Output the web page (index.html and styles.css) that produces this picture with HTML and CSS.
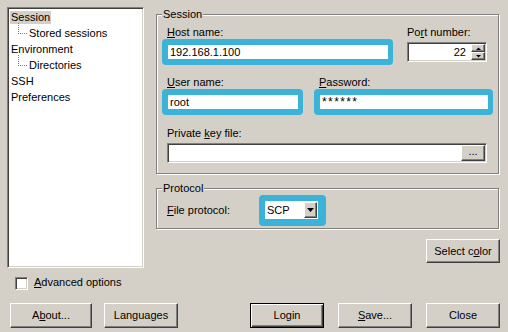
FILE: index.html
```html
<!DOCTYPE html>
<html>
<head>
<meta charset="utf-8">
<title>Login</title>
<link rel="stylesheet" href="styles.css">
</head>
<body>
<div class="dialog">
  <div class="main">
    <div class="left">
      <div class="tree sunken">
        <div class="node"><span class="sel">Session</span></div>
        <div class="node child"><span class="branch"></span>Stored sessions</div>
        <div class="node">Environment</div>
        <div class="node child"><span class="branch"></span>Directories</div>
        <div class="node">SSH</div>
        <div class="node">Preferences</div>
      </div>
      <div class="check"><span class="box sunken"></span><span class="check-lbl"><u>A</u>dvanced options</span></div>
    </div>
    <div class="right">
      <div class="group session">
        <div class="title">Session</div>
        <div class="row r1">
          <div class="field host">
            <div class="lbl"><u>H</u>ost name:</div>
            <div class="hl"><div class="text">192.168.1.100</div></div>
          </div>
          <div class="field port">
            <div class="lbl nopad">Po<u>r</u>t number:</div>
            <div class="spin sunken">
              <span class="val">22</span>
              <span class="spinbtns">
                <span class="sb"><svg width="5" height="3" viewBox="0 0 5 3"><path d="M0 3H5L2.5 0.5Z" fill="#000"/></svg></span>
                <span class="sb"><svg width="5" height="3" viewBox="0 0 5 3"><path d="M0 0H5L2.5 2.5Z" fill="#000"/></svg></span>
              </span>
            </div>
          </div>
        </div>
        <div class="row r2">
          <div class="field user">
            <div class="lbl"><u>U</u>ser name:</div>
            <div class="hl"><div class="text">root</div></div>
          </div>
          <div class="field pass">
            <div class="lbl"><u>P</u>assword:</div>
            <div class="hl"><div class="text stars">******</div></div>
          </div>
        </div>
        <div class="r3">
          <div class="lbl">Private <u>k</u>ey file:</div>
          <div class="keyinput sunken"><span class="btn small">...</span></div>
        </div>
      </div>
      <div class="group protocol">
        <div class="title">Protocol</div>
        <div class="prow">
          <div class="plbl"><u>F</u>ile protocol:</div>
          <div class="hl hl-sel">
            <div class="select"><span class="sel-text">SCP</span><span class="btn drop"><svg width="7" height="4" viewBox="0 0 7 4"><path d="M0 0H7L3.5 4Z" fill="#000"/></svg></span></div>
          </div>
        </div>
      </div>
      <div class="color-row"><button class="btn">Select c<u>o</u>lor</button></div>
    </div>
  </div>
  <div class="footer">
    <button class="btn about">A<u>b</u>out...</button>
    <button class="btn langs">Languages</button>
    <button class="btn login default">Login</button>
    <button class="btn save"><u>S</u>ave...</button>
    <button class="btn close">Close</button>
  </div>
</div>
</body>
</html>
```

FILE: styles.css
```css
* { box-sizing: border-box; }
html, body { margin: 0; padding: 0; }
body {
  background: #d4d0c8;
  font-family: "Liberation Sans", Arial, sans-serif;
  font-size: 11px;
  line-height: 13px;
  color: #000;
  width: 508px;
  height: 332px;
  overflow: hidden;
}
u { text-decoration: underline; text-underline-offset: 1px; }

.dialog {
  height: 332px;
  padding: 7px 8px 4px 7px;
  display: flex;
  flex-direction: column;
}
.main { display: flex; }

.sunken {
  background: #fff;
  border: 1px solid;
  border-color: #808080 #fff #fff #808080;
  box-shadow: inset 1px 1px 0 #404040, inset -1px -1px 0 #d4d0c8;
}

/* left column */
.left { width: 137px; display: flex; flex-direction: column; }
.tree { height: 261px; padding: 1px 0 0 3px; }
.node { height: 16px; line-height: 16px; white-space: nowrap; }
.sel { background: #d4d0c8; padding: 0 1px; margin-left: -1px; line-height: 13px; display: inline-block; }
.node.child { display: flex; align-items: flex-start; }
.branch {
  display: block;
  width: 9px;
  height: 11px;
  margin: -2px 2px 0 7px;
  border-left: 1px dotted #808080;
  border-bottom: 1px dotted #808080;
}
.check { display: flex; align-items: flex-start; margin: 9px 0 0 8px; }
.box { width: 13px; height: 13px; flex: none; }
.check-lbl { margin: -1px 0 0 6px; }

/* right column */
.right { width: 344px; margin-left: 12px; margin-top: 1px; display: flex; flex-direction: column; }
.group {
  border: 1px solid #808080;
  box-shadow: inset 1px 1px 0 #fff, 1px 1px 0 #fff;
  width: 343px;
  padding: 0 0 0 5px;
}
.title {
  width: max-content;
  margin-top: -7px;
  padding: 0 1px;
  background: #d4d0c8;
  line-height: 13px;
}
.session { margin-top: 6px; padding-bottom: 10px; }
.protocol { margin-top: 14px; padding-bottom: 2px; }

.row { display: flex; }
.r1 { margin-top: 5px; }
.r2 { margin-top: 11px; }
.r3 { margin-top: 12px; }
.lbl { padding-left: 5px; white-space: nowrap; }
.lbl.nopad { padding-left: 0; }

.hl {
  background: #3bb3d9;
  border-radius: 4px;
  padding: 6px 5px 6px 6px;
}
.hl .text {
  background: #fff;
  height: 14px;
  line-height: 14px;
  padding-left: 2px;
  white-space: nowrap;
}
.hl .text.stars { letter-spacing: 1.4px; font-size: 12px; }
.host { width: 231px; }
.port { width: 80px; margin-left: 14px; }
.user { width: 141px; }
.pass { width: 179px; margin-left: 11px; }

.spin {
  margin-top: 3px;
  height: 20px;
  display: flex;
  align-items: stretch;
  padding: 1px;
}
.val { flex: 1; text-align: right; padding-right: 5px; line-height: 16px; }
.spinbtns { width: 14px; display: flex; flex-direction: column; }
.sb {
  flex: 1;
  display: flex;
  align-items: center;
  justify-content: center;
  background: #d4d0c8;
  border: 1px solid;
  border-color: #fff #404040 #404040 #fff;
  box-shadow: inset -1px -1px 0 #808080;
}
.sb svg { display: block; }

.keyinput {
  margin: 3px 0 0 5px;
  width: 320px;
  height: 20px;
  padding: 1px;
  display: flex;
  justify-content: flex-end;
}

/* buttons */
.btn {
  display: flex;
  align-items: center;
  justify-content: center;
  height: 25px;
  margin: 0;
  padding: 0;
  font: inherit;
  line-height: 13px;
  color: #000;
  background: #d4d0c8;
  border: 1px solid;
  border-color: #fff #404040 #404040 #fff;
  box-shadow: inset -1px -1px 0 #808080;
  border-radius: 0;
}
.btn.small { width: 24px; height: 16px; align-items: flex-end; padding-bottom: 2px; }
.btn.default {
  border: 1px solid #000;
  box-shadow: inset 1px 1px 0 #fff, inset -1px -1px 0 #404040, inset -2px -2px 0 #808080;
}

/* protocol */
.prow { display: flex; align-items: center; }
.plbl { width: 97px; padding-left: 5px; }
.hl-sel { padding: 6px 8px 7px 6px; }
.select {
  width: 53px;
  height: 18px;
  background: #fff;
  display: flex;
  align-items: stretch;
  padding: 1px 1px 1px 0;
}
.sel-text { flex: 1; padding-left: 2px; line-height: 16px; }
.btn.drop { width: 13px; height: 16px; }
.btn.drop svg { display: block; }

.color-row { display: flex; justify-content: flex-end; margin-top: 10px; }
.color-row .btn { width: 74px; height: 24px; }

/* footer */
.footer { display: flex; margin-top: auto; padding-left: 3px; }
.about { width: 82px; }
.langs { width: 74px; margin-left: 12px; }
.login { width: 74px; margin-left: auto; }
.save { width: 74px; margin-left: 14px; }
.close { width: 74px; margin-left: 14px; }
```
